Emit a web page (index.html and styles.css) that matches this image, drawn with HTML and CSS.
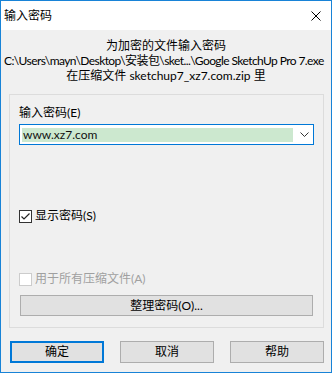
FILE: index.html
```html
<!DOCTYPE html>
<html>
<head>
<meta charset="utf-8">
<link rel="stylesheet" href="styles.css">
</head>
<body>
<div class="window">
  <div class="titlebar">
    <span class="title">输入密码</span>
    <svg class="close" width="10" height="10" viewBox="0 0 10 10"><path d="M0.5 0.5L9.5 9.5M9.5 0.5L0.5 9.5" stroke="#000" stroke-width="1" fill="none"/></svg>
  </div>
  <div class="content">
    <div class="info">
      <div class="line">为加密的文件输入密码</div>
      <div class="line path">C:\Users\mayn\Desktop\安装包\sket...\Google SketchUp Pro 7.exe</div>
      <div class="line">在压缩文件 sketchup7_xz7.com.zip 里</div>
    </div>
    <div class="group">
      <div class="label">输入密码(E)</div>
      <div class="combo">
        <span class="sel">www.xz7.com</span>
        <svg class="arrow" width="9" height="5" viewBox="0 0 9 5"><path d="M0.5 0.5L4.5 4.5L8.5 0.5" stroke="#333" stroke-width="1" fill="none"/></svg>
      </div>
      <label class="check show">
        <span class="box checked"><svg width="11" height="11" viewBox="0 0 11 11"><path d="M1.5 5.5L4 8L9.5 2.5" stroke="#222" stroke-width="1.2" fill="none"/></svg></span>
        <span>显示密码(S)</span>
      </label>
      <label class="check disabled">
        <span class="box"></span>
        <span>用于所有压缩文件(A)</span>
      </label>
      <div class="btn wide">整理密码(O)...</div>
    </div>
    <div class="buttons">
      <div class="btn default">确定</div>
      <div class="btn">取消</div>
      <div class="btn">帮助</div>
    </div>
  </div>
</div>
</body>
</html>
```
FILE: styles.css
```css
* { box-sizing: border-box; }
html, body { margin: 0; padding: 0; }
body {
  font-family: "Lato", "Noto Sans CJK SC", sans-serif;
  font-size: 12px;
  color: #000;
  background: #fff;
}
.window {
  width: 332px;
  height: 373px;
  border: 1px solid #1883d7;
  display: flex;
  flex-direction: column;
  background: #f0f0f0;
  overflow: hidden;
}
.titlebar {
  height: 29px;
  background: #fff;
  display: flex;
  align-items: center;
  justify-content: space-between;
  padding: 0 10px 0 3px;
  flex: none;
}
.title { line-height: 14px; }
.close { display: block; }
.content {
  flex: 1;
  display: flex;
  flex-direction: column;
  padding: 8px 0 0 0;
}
.info { text-align: center; white-space: nowrap; }
.line { line-height: 15px; height: 15px; }
.path { letter-spacing: -0.58px; text-align: left; padding-left: 3px; }
.group {
  margin: 11px 7px 0 8px;
  border: 1px solid #dcdcdc;
  height: 234px;
  padding: 10px 9px 0 9px;
  display: flex;
  flex-direction: column;
}
.label { line-height: 16px; height: 16px; }
.combo {
  margin-top: 3px;
  height: 21px;
  border: 1px solid #0078d7;
  background: #fff;
  display: flex;
  align-items: center;
  padding: 0 4px 0 2px;
  justify-content: space-between;
}
.sel {
  background: #cce8cf;
  width: 271px;
  height: 14px;
  line-height: 14px;
  padding-left: 1px;
  color: #111;
}
.arrow { display: block; }
.check {
  display: flex;
  align-items: center;
  gap: 3px;
  line-height: 14px;
}
.check.show { margin-top: 64px; }
.check.disabled { margin-top: 49px; color: #a0a0a0; }
.box {
  width: 13px;
  height: 13px;
  border: 1px solid #333;
  background: #fff;
  display: flex;
  align-items: center;
  justify-content: center;
}
.disabled .box { border-color: #cccccc; }
.btn {
  height: 21px;
  border: 1px solid #adadad;
  background: #e1e1e1;
  display: flex;
  align-items: center;
  justify-content: center;
  line-height: 14px;
}
.btn.wide { margin-top: 9px; margin-left: 1px; width: 293px; }
.buttons {
  display: flex;
  gap: 16px;
  margin: 13px 0 0 9px;
}
.buttons .btn { width: 94px; height: 22px; }
.btn.default { border: 2px solid #0078d7; }
```
